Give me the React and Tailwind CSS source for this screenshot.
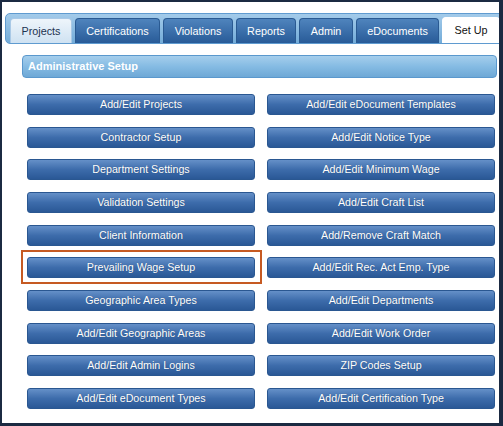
const tabs = [
    { label: 'Projects', w: 'w-[62px]', kind: 'light' },
    { label: 'Certifications', w: 'w-[85px]' },
    { label: 'Violations', w: 'w-[70px]' },
    { label: 'Reports', w: 'w-[60px]' },
    { label: 'Admin', w: 'w-[54px]' },
    { label: 'eDocuments', w: 'w-[83px]' },
    { label: 'Set Up', w: 'w-[58px]', kind: 'active' },
]

const buttons = [
    ['Add/Edit Projects', 'Add/Edit eDocument Templates'],
    ['Contractor Setup', 'Add/Edit Notice Type'],
    ['Department Settings', 'Add/Edit Minimum Wage'],
    ['Validation Settings', 'Add/Edit Craft List'],
    ['Client Information', 'Add/Remove Craft Match'],
    ['Prevailing Wage Setup', 'Add/Edit Rec. Act Emp. Type'],
    ['Geographic Area Types', 'Add/Edit Departments'],
    ['Add/Edit Geographic Areas', 'Add/Edit Work Order'],
    ['Add/Edit Admin Logins', 'ZIP Codes Setup'],
    ['Add/Edit eDocument Types', 'Add/Edit Certification Type'],
]

const Tab = ({ label, w, kind }) => {
    let style = 'bg-gradient-to-b from-[#4f84bd] to-[#285b98] border-[#2a5a92] text-white'
    if (kind === 'light') style = 'bg-gradient-to-b from-[#eef5fb] to-[#cfe2f2] border-[#a9c9e6] text-[#1d3350]'
    if (kind === 'active') style = 'bg-white border-white text-[#111] h-[26px]'
    return (
        <div className={`${w} h-[25px] ${style} border border-b-0 rounded-t-[4px] flex items-center justify-center text-[10.8px] shrink-0`}>
            {label}
        </div>
    )
}

const SetupButton = ({ label, highlight }) => (
    <div className="relative">
        <button className="w-full h-[21px] rounded-[3px] border border-[#2a5791] bg-gradient-to-b from-[#6590c8] via-[#3d6cab] to-[#2a5896] text-white text-[10.7px] leading-none flex items-center justify-center [text-shadow:0_0_1px_rgba(0,0,0,0.3)]">
            {label}
        </button>
        {highlight && (
            <div className="absolute left-[-6px] right-[-7px] top-[-7px] bottom-[-6px] border-2 border-[#c65a22] pointer-events-none" />
        )}
    </div>
)

const App = () => {
    return (
        <div className="w-[503px] h-[426px] bg-white border-l-2 border-t-2 border-r-[4px] border-b-[3px] border-[#1b2a42] overflow-hidden font-['Liberation_Sans',Arial,sans-serif]">
            <div className="pt-[11px] pl-[3px]">
                <div className="w-[500px] h-[31px] rounded-[5px] border border-[#5f9bd0] bg-gradient-to-b from-[#a3cbea] to-[#73acd9] flex items-end gap-[3px] pl-[4px]">
                    {tabs.map((t) => (
                        <Tab key={t.label} {...t} />
                    ))}
                </div>
            </div>

            <div className="pl-[20px] pr-[2px] pt-[11px]">
                <div className="h-[23px] rounded-[4px] border border-[#5a98cd] bg-gradient-to-b from-[#a5ceec] via-[#85bbe3] to-[#6ea8d6] flex items-center pl-[5px] text-white text-[11px] font-bold">
                    Administrative Setup
                </div>
            </div>

            <div className="pl-[25px] pr-[4px] pt-[16px] grid grid-cols-2 gap-x-[12px] gap-y-[11.67px]">
                {buttons.map(([left, right]) => (
                    <div key={left} className="contents">
                        <SetupButton label={left} highlight={left === 'Prevailing Wage Setup'} />
                        <SetupButton label={right} />
                    </div>
                ))}
            </div>
        </div>
    )
}

export default App
